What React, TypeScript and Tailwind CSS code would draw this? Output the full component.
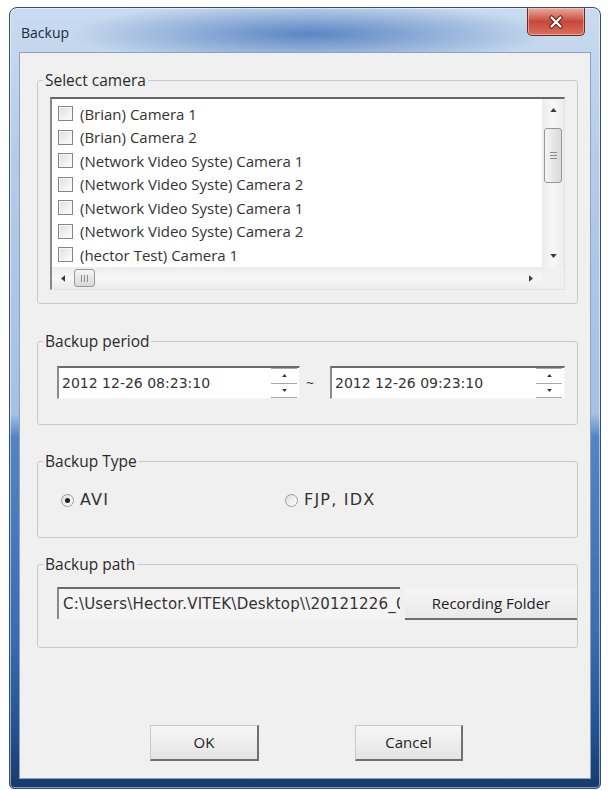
import React from "react";

const cameras = [
  "(Brian) Camera 1",
  "(Brian) Camera 2",
  "(Network Video Syste) Camera 1",
  "(Network Video Syste) Camera 2",
  "(Network Video Syste) Camera 1",
  "(Network Video Syste) Camera 2",
  "(hector Test) Camera 1",
];

type Dir = "up" | "down" | "left" | "right";

function Arrow({ dir, className }: { dir: Dir; className: string }) {
  const vertical = dir === "up" || dir === "down";
  const pts =
    dir === "up"
      ? "0,5 4,0 8,5"
      : dir === "down"
      ? "0,0 8,0 4,5"
      : dir === "left"
      ? "5,0 5,8 0,4"
      : "0,0 5,4 0,8";
  return (
    <svg viewBox={vertical ? "0 0 8 5" : "0 0 5 8"} className={className}>
      <polygon points={pts} fill="#3a3a3a" />
    </svg>
  );
}

function CheckBox() {
  return (
    <span className="w-[15px] h-[15px] shrink-0 border border-[#858585] bg-gradient-to-br from-[#dedede] to-white shadow-[inset_0_0_0_1px_#f7f7f7]" />
  );
}

function Spinner() {
  return (
    <div className="w-[26px] h-[30px] mr-[2px] flex flex-col">
      <div className="flex-1 border-t border-[#a9a9a9] flex items-center justify-center">
        <Arrow dir="up" className="w-[5px] h-[3px]" />
      </div>
      <div className="flex-1 border-t border-b border-[#a9a9a9] flex items-center justify-center">
        <Arrow dir="down" className="w-[5px] h-[3px]" />
      </div>
    </div>
  );
}

function DateBox({ value, width }: { value: string; width: string }) {
  return (
    <div
      className={`${width} h-[33px] bg-white border-t-2 border-l-2 border-t-[#6a6a6a] border-l-[#8a8a8a] border-r border-b border-r-[#f4f4f4] border-b-[#f4f4f4] flex items-center justify-between`}
    >
      <span className="pl-[3px] text-[14px] text-[#333] font-['DejaVu_Sans',sans-serif]">
        {value}
      </span>
      <Spinner />
    </div>
  );
}

function Radio({ checked, label }: { checked: boolean; label: string }) {
  return (
    <div className="flex items-center">
      <span className="w-[13px] h-[13px] rounded-full border border-[#9a9a9a] bg-gradient-to-br from-[#dedede] to-white flex items-center justify-center">
        {checked && <span className="w-[5px] h-[5px] rounded-full bg-[#1f1f1f]" />}
      </span>
      <span className="ml-[6px] text-[16px] tracking-[1.2px] text-[#333] font-['DejaVu_Sans',sans-serif]">
        {label}
      </span>
    </div>
  );
}

function Legend({ children }: { children: React.ReactNode }) {
  return (
    <legend className="ml-[5px] px-[2px] text-[15.5px] leading-[16px] text-[#2a2a2a]">
      {children}
    </legend>
  );
}

function DialogButton({ label, width }: { label: string; width: string }) {
  return (
    <button
      className={`${width} h-[36px] bg-gradient-to-b from-[#f7f7f7] to-[#e4e4e4] border-t border-l border-t-[#c9c9c9] border-l-[#c9c9c9] border-r-2 border-b-2 border-r-[#707070] border-b-[#707070] text-[15px] text-[#1e1e1e]`}
    >
      {label}
    </button>
  );
}

export default function App() {
  return (
    <div className="w-[609px] h-[790px] bg-white pl-[9px] pt-[7px] font-['Open_Sans','Noto_Sans',sans-serif]">
      {/* window frame */}
      <div className="w-[592px] h-[782px] rounded-t-[8px] rounded-b-[5px] border border-[#2f4d78] bg-[radial-gradient(ellipse_240px_32px_at_300px_26px,rgba(55,105,180,0.75),transparent),linear-gradient(to_bottom,#c9dbef_0%,#b4cbe8_20%,#a6c1e3_52%,#5384c3_55%,#3d6db0_80%,#23518f_93%,#173a6c_100%)] flex flex-col px-[9px] pb-[9px] shadow-[inset_0_0_0_1px_rgba(255,255,255,0.5)]">
        {/* title bar */}
        <div className="h-[44px] flex items-start justify-between">
          <span className="mt-[14px] ml-[2px] text-[14px] text-[#1b2a3a]">Backup</span>
          <button className="mr-[6px] w-[58px] h-[28px] rounded-b-[5px] border border-t-0 border-[#6a2a22] bg-gradient-to-b from-[#eaa99d] via-[#c7483b] to-[#d8705d] shadow-[inset_0_0_0_1px_rgba(255,220,210,0.5)] flex items-center justify-center">
            <svg viewBox="0 0 16 14" className="w-[16px] h-[14px]">
              <path d="M3.5 2.5 L12.5 11.5 M12.5 2.5 L3.5 11.5" stroke="#5a1d16" strokeWidth="4.4" strokeLinecap="round" />
              <path d="M3.5 2.5 L12.5 11.5 M12.5 2.5 L3.5 11.5" stroke="#ffffff" strokeWidth="2.4" strokeLinecap="round" />
            </svg>
          </button>
        </div>

        {/* client area */}
        <div className="flex-1 bg-[#f0f0f0] border border-[#8aa2c4] flex flex-col pl-[17px]">
          {/* Select camera */}
          <fieldset className="mt-[19px] w-[541px] border border-[#c9c9c9] rounded-[3px] pb-[13px]">
            <Legend>Select camera</Legend>
            <div className="ml-[12px] mt-[9px] w-[515px] h-[193px] bg-white border-t-2 border-l-2 border-t-[#666] border-l-[#888] border-r border-b border-r-[#e2e2e2] border-b-[#e2e2e2] flex flex-col">
              <div className="h-[168px] flex">
                <div className="flex-1 pt-[3px] overflow-hidden">
                  {cameras.map((c, i) => (
                    <div key={i} className="h-[23.5px] flex items-center pl-[6px]">
                      <CheckBox />
                      <span className="ml-[7px] text-[15px] text-[#333] whitespace-nowrap">{c}</span>
                    </div>
                  ))}
                </div>
                {/* vertical scrollbar */}
                <div className="w-[22px] bg-gradient-to-r from-[#ececec] via-[#f7f7f7] to-[#ececec] flex flex-col">
                  <div className="h-[22px] flex items-center justify-center">
                    <Arrow dir="up" className="w-[7px] h-[4px]" />
                  </div>
                  <div className="mt-[7px] mx-[2px] h-[55px] rounded-[3px] border border-[#979797] bg-gradient-to-r from-[#f5f5f5] to-[#d9d9d9] flex flex-col items-center justify-center gap-[2px]">
                    <span className="w-[7px] h-[1px] bg-[#8a8a8a]" />
                    <span className="w-[7px] h-[1px] bg-[#8a8a8a]" />
                    <span className="w-[7px] h-[1px] bg-[#8a8a8a]" />
                  </div>
                  <div className="flex-1" />
                  <div className="h-[22px] flex items-center justify-center">
                    <Arrow dir="down" className="w-[7px] h-[4px]" />
                  </div>
                </div>
              </div>
              {/* horizontal scrollbar */}
              <div className="flex-1 flex">
                <div className="flex-1 bg-gradient-to-b from-[#ececec] via-[#f7f7f7] to-[#ececec] flex items-center">
                  <div className="w-[22px] flex justify-center">
                    <Arrow dir="left" className="w-[4px] h-[7px]" />
                  </div>
                  <div className="w-[21px] h-[18px] rounded-[3px] border border-[#979797] bg-gradient-to-b from-[#f5f5f5] to-[#d9d9d9] flex items-center justify-center gap-[2px]">
                    <span className="w-[1px] h-[7px] bg-[#8a8a8a]" />
                    <span className="w-[1px] h-[7px] bg-[#8a8a8a]" />
                    <span className="w-[1px] h-[7px] bg-[#8a8a8a]" />
                  </div>
                  <div className="flex-1" />
                  <div className="w-[22px] flex justify-center">
                    <Arrow dir="right" className="w-[4px] h-[7px]" />
                  </div>
                </div>
                <div className="w-[22px] bg-[#f0f0f0]" />
              </div>
            </div>
          </fieldset>

          {/* Backup period */}
          <fieldset className="mt-[29px] w-[541px] border border-[#c9c9c9] rounded-[3px] pb-[25px]">
            <Legend>Backup period</Legend>
            <div className="ml-[19px] mt-[17px] flex items-center">
              <DateBox value="2012 12-26 08:23:10" width="w-[243px]" />
              <span className="w-[30px] pl-[6px] text-[14px] text-[#333]">~</span>
              <DateBox value="2012 12-26 09:23:10" width="w-[235px]" />
            </div>
          </fieldset>

          {/* Backup Type */}
          <fieldset className="mt-[28px] w-[541px] border border-[#c9c9c9] rounded-[3px] pb-[25px]">
            <Legend>Backup Type</Legend>
            <div className="ml-[23px] mt-[19px] h-[24px] flex items-center">
              <div className="w-[224px]">
                <Radio checked label="AVI" />
              </div>
              <Radio checked={false} label="FJP, IDX" />
            </div>
          </fieldset>

          {/* Backup path */}
          <fieldset className="mt-[18px] w-[541px] border border-[#c9c9c9] rounded-[3px] pb-[27px]">
            <Legend>Backup path</Legend>
            <div className="ml-[19px] mt-[15px] flex items-start">
              <div className="w-[343px] h-[32px] bg-[#f4f4f4] border-t-2 border-l-2 border-t-[#6a6a6a] border-l-[#8a8a8a] flex items-center">
                <span className="block w-full pl-[4px] overflow-hidden whitespace-nowrap text-[15px] tracking-[0.2px] text-[#333] font-['DejaVu_Sans',sans-serif]">
                  C:\Users\Hector.VITEK\Desktop\\20121226_0
                </span>
              </div>
              <button className="ml-[5px] mt-[2px] w-[172px] h-[31px] bg-gradient-to-b from-[#f5f5f5] to-[#e9e9e9] border-b-2 border-b-[#6e6e6e] text-[15px] text-[#1e1e1e]">
                Recording Folder
              </button>
            </div>
          </fieldset>

          {/* dialog buttons */}
          <div className="mt-[77px] flex">
            <div className="ml-[113px]">
              <DialogButton label="OK" width="w-[109px]" />
            </div>
            <div className="ml-[96px]">
              <DialogButton label="Cancel" width="w-[108px]" />
            </div>
          </div>
        </div>
      </div>
    </div>
  );
}
